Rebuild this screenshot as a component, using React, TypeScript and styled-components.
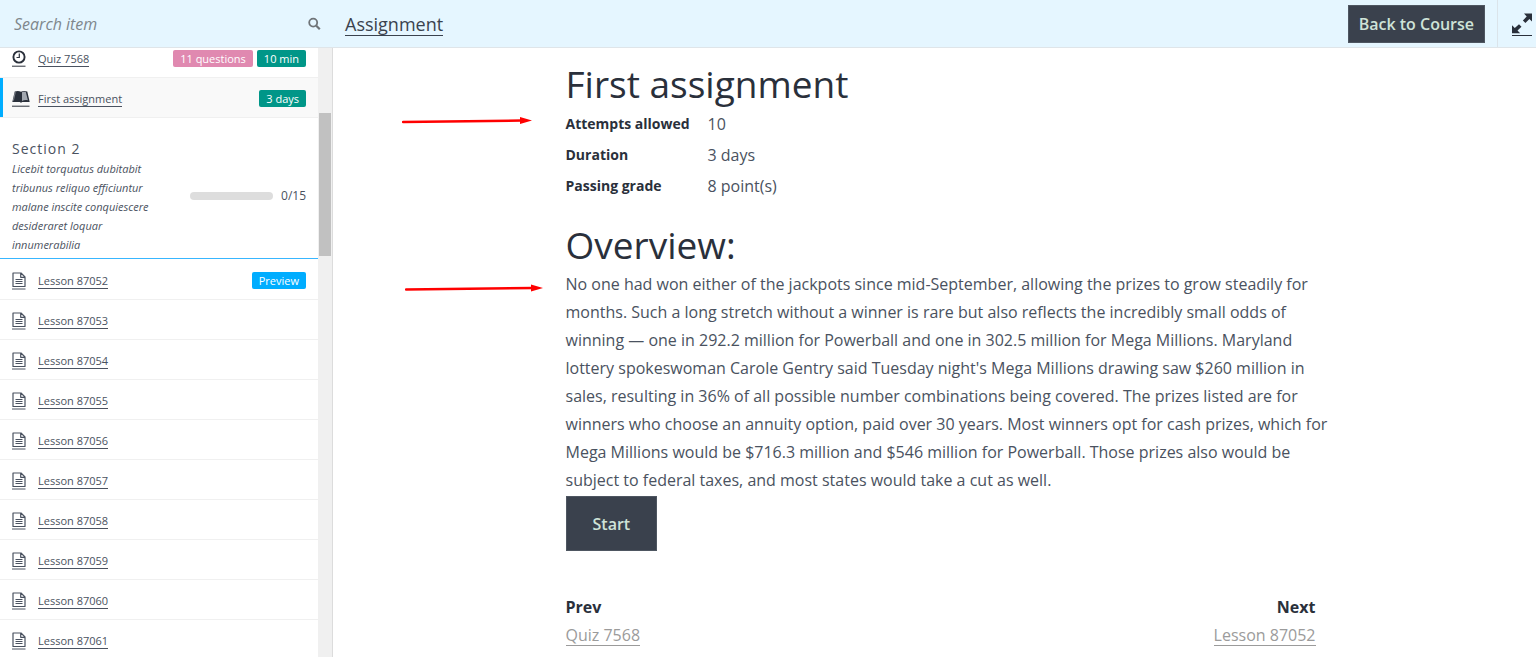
import React from "react";
import styled, { createGlobalStyle } from "styled-components";

const Global = createGlobalStyle`
  * { box-sizing: border-box; }
  html, body, #root { height: 100%; }
  body {
    margin: 0;
    overflow: hidden;
    background: #fff;
    color: #4a5260;
    font-family: "Open Sans", "Noto Sans", sans-serif;
    font-size: 16px;
    line-height: 28px;
  }
  a { color: inherit; text-decoration: none; }
  h1, h2, h3, p, ul, dl, dd { margin: 0; padding: 0; }
`;

const Page = styled.div`
  display: flex;
  flex-direction: column;
  height: 100vh;
`;

const TopBar = styled.header`
  display: flex;
  align-items: stretch;
  flex: none;
  height: 48px;
  background: #e5f6ff;
  border-bottom: 1px solid #dfe5e9;
`;

const SearchForm = styled.form`
  display: flex;
  align-items: center;
  flex: none;
  width: 333px;
  padding: 0 12px 0 14px;
`;

const SearchInput = styled.input`
  flex: 1;
  min-width: 0;
  padding: 0;
  border: 0;
  outline: 0;
  background: transparent;
  color: #4a5260;
  font: italic 16px/24px "Open Sans", "Noto Sans", sans-serif;
  &::placeholder { color: #7f878c; opacity: 1; }
`;

const IconButton = styled.button`
  display: flex;
  align-items: center;
  justify-content: center;
  padding: 0;
  border: 0;
  background: transparent;
  color: #6f7478;
`;

const TopTitle = styled.div`
  display: flex;
  flex: 1;
  align-items: center;
  padding: 2px 12px 0;
  font-size: 18px;
  line-height: 21px;
  color: #3a424e;
`;

const UnderLink = styled.a<{ $tone?: string }>`
  color: ${(p) => p.$tone ?? "inherit"};
  border-bottom: 1px solid currentColor;
`;

const BackButton = styled.button`
  align-self: center;
  height: 38px;
  padding: 0 10px;
  border: 1px solid #4e5661;
  background: #3a414d;
  color: #cfe3d8;
  font: 600 16px/24px "Open Sans", "Noto Sans", sans-serif;
`;

const Fullscreen = styled(IconButton)`
  width: 39px;
  margin-left: 12px;
  padding-left: 10px;
  border-left: 1px solid #dbe4ea;
  color: #2a303b;
`;

const Body = styled.div`
  display: flex;
  flex: 1;
  min-height: 0;
`;

const Sidebar = styled.aside`
  display: flex;
  flex: none;
  width: 333px;
  border-right: 1px solid #dcdcdc;
  overflow: hidden;
`;

const Curriculum = styled.div`
  flex: 1;
  min-width: 0;
  overflow: hidden;
`;

const ScrollTrack = styled.div`
  width: 14px;
  flex: none;
  padding: 65px 1px 0;
  background: #f0f0f0;
`;

const ScrollThumb = styled.div`
  height: 143px;
  background: #c1c1c1;
`;

const ItemList = styled.ul<{ $spaced?: boolean }>`
  list-style: none;
  padding-top: ${(p) => (p.$spaced ? 1 : 0)}px;
`;

const Item = styled.li<{ $current?: boolean; $cut?: boolean }>`
  display: flex;
  align-items: center;
  height: ${(p) => (p.$cut ? 30 : 40)}px;
  padding: ${(p) => (p.$cut ? "0 12px 8px" : "2px 12px 0")};
  border-bottom: 1px solid #f0f0f0;
  ${(p) => p.$current && "background: #f9f9f9; box-shadow: inset 3px 0 0 #00adff;"}
`;

const ItemIcon = styled.span`
  flex: none;
  display: flex;
  width: 26px;
  color: #2a303b;
  svg { display: block; }
`;

const ItemName = styled.span`
  flex: 1;
  font-size: 11px;
  line-height: 16px;
`;

const Tag = styled.span<{ $color: string }>`
  margin-left: 4px;
  padding: 0 7px;
  border-radius: 2px;
  background: ${(p) => p.$color};
  color: #fff;
  font-size: 11px;
  line-height: 17px;
`;

const SectionHead = styled.div`
  display: flex;
  align-items: center;
  justify-content: space-between;
  padding: 20px 12px 4px;
  border-bottom: 1px solid #38b6ff;
`;

const SectionText = styled.div`
  width: 160px;
`;

const SectionTitle = styled.h3`
  font-size: 14px;
  font-weight: 400;
  line-height: 21px;
  letter-spacing: 1px;
`;

const SectionDesc = styled.p`
  font-size: 11px;
  font-style: italic;
  line-height: 19px;
`;

const Progress = styled.div`
  display: flex;
  align-items: center;
  gap: 8px;
  font-size: 12px;
  line-height: 16px;
`;

const Bar = styled.div`
  width: 83px;
  height: 8px;
  border-radius: 4px;
  background: #ddd;
`;

const Main = styled.main`
  position: relative;
  flex: 1;
  min-width: 0;
  padding-left: 12px;
  overflow: hidden;
`;

const Content = styled.article`
  max-width: 750px;
  margin: 0 auto;
  padding-top: 12px;
`;

const Heading = styled.h1`
  font-size: 37px;
  font-weight: 400;
  line-height: 48px;
  color: #2a303b;
`;

const Facts = styled.dl`
  display: grid;
  grid-template-columns: 142px 1fr;
  grid-auto-rows: 31px;
  align-items: center;
  margin-bottom: 20px;
  dt { color: #2a303b; font-size: 14px; font-weight: 700; }
`;

const Overview = styled.p`
  margin: 0 -16px 2px 0;
  padding-top: 1px;
  font-size: 16px;
  line-height: 28px;
`;

const StartButton = styled.button`
  display: block;
  height: 55px;
  padding: 0 26px;
  border: 1px solid #4e5661;
  background: #3a414d;
  color: #cfe3d8;
  font: 600 16px/24px "Open Sans", "Noto Sans", sans-serif;
`;

const Pager = styled.nav`
  display: flex;
  justify-content: space-between;
  margin-top: 42px;
  line-height: 28px;
`;

const PagerSide = styled.div<{ $end?: boolean }>`
  display: flex;
  flex-direction: column;
  align-items: ${(p) => (p.$end ? "flex-end" : "flex-start")};
  strong { color: #2a303b; font-size: 16px; font-weight: 700; }
  a { line-height: 20px; margin-top: 4px; }
`;

const Pointer = styled.svg<{ $left: number; $top: number }>`
  position: absolute;
  left: ${(p) => p.$left}px;
  top: ${(p) => p.$top}px;
`;

const lessons = [87052, 87053, 87054, 87055, 87056, 87057, 87058, 87059, 87060, 87061];

const FileIcon = () => (
  <svg width="14" height="18" viewBox="0 0 14 18" fill="none" stroke="#4a5260">
    <path d="M1 1H9L13 5V14.500H1Z M8.700 1V5.300H13" strokeWidth="1.200" strokeLinejoin="round" />
    <path d="M3.500 7.500H10.500M3.500 9.500H10.500M3.500 11.500H10.500M0 17H13.500" />
  </svg>
);

const ClockIcon = () => (
  <svg width="14" height="17" viewBox="0 0 14 17" fill="none" stroke="currentColor">
    <circle cx="7" cy="7" r="5.600" strokeWidth="1.900" />
    <path d="M7.300 3.600V7.500H4.500" strokeWidth="1.200" />
    <path d="M0 16.200H13.500" />
  </svg>
);

const BookIcon = () => (
  <svg width="18" height="17" viewBox="0 0 18 17">
    <path d="M2.700 1.500C5 .7 7.300 .8 9 1.700C10.700 .8 13 .7 15.300 1.500L17.700 12H10.200C9.500 12.700 8.500 12.700 7.800 12H.3Z" fill="currentColor" />
    <path d="M3.300 2.200L1.400 10.600" stroke="#b8bcc2" strokeWidth=".6" />
    <path d="M10 2.300C11.500 1.700 12.800 1.700 13.800 2L15.900 10.300C14 9.800 11.700 10 10 10.900Z" fill="#a3a8b0" />
    <path d="M0 16.200H17.500" stroke="currentColor" />
  </svg>
);

const SearchIcon = () => (
  <svg width="13" height="13" viewBox="0 0 13 13" fill="none" stroke="currentColor">
    <circle cx="5.200" cy="5.600" r="4" strokeWidth="1.800" />
    <path d="M8.300 8.700L11.800 12.200" strokeWidth="2.200" />
  </svg>
);

const ExpandIcon = () => (
  <svg width="20" height="24" viewBox="0 0 20 24">
    <path d="M12 1.500H20V9.500L17.400 6.900L13.400 10.900L10.900 8.400L14.700 4.400ZM7 12.200L9.500 14.700L5.500 18.500L8.200 21.200H0V13.200L2.800 16Z" fill="currentColor" />
    <path d="M0 23.500H20" stroke="currentColor" />
  </svg>
);

export default function App() {
  return (
    <Page>
      <Global />
      <TopBar>
        <SearchForm>
          <SearchInput aria-label="Search item" placeholder="Search item" />
          <IconButton type="button" aria-label="Search"><SearchIcon /></IconButton>
        </SearchForm>
        <TopTitle><UnderLink href="#assignment">Assignment</UnderLink></TopTitle>
        <BackButton type="button">Back to Course</BackButton>
        <Fullscreen type="button" aria-label="Toggle full screen"><ExpandIcon /></Fullscreen>
      </TopBar>
      <Body>
        <Sidebar>
          <Curriculum>
            <ItemList>
              <Item $cut>
                <ItemIcon><ClockIcon /></ItemIcon>
                <ItemName><UnderLink href="#quiz">Quiz 7568</UnderLink></ItemName>
                <Tag $color="#e089b0">11 questions</Tag>
                <Tag $color="#009688">10 min</Tag>
              </Item>
              <Item $current>
                <ItemIcon><BookIcon /></ItemIcon>
                <ItemName><UnderLink href="#first">First assignment</UnderLink></ItemName>
                <Tag $color="#009688">3 days</Tag>
              </Item>
            </ItemList>
            <SectionHead>
              <SectionText>
                <SectionTitle>Section 2</SectionTitle>
                <SectionDesc>
                  Licebit torquatus dubitabit tribunus reliquo efficiuntur malane inscite conquiescere desideraret loquar innumerabilia
                </SectionDesc>
              </SectionText>
              <Progress><Bar /><span>0/15</span></Progress>
            </SectionHead>
            <ItemList $spaced>
              {lessons.map((n, i) => (
                <Item key={n}>
                  <ItemIcon><FileIcon /></ItemIcon>
                  <ItemName><UnderLink href={`#lesson-${n}`}>Lesson {n}</UnderLink></ItemName>
                  {i === 0 && <Tag $color="#00adff">Preview</Tag>}
                </Item>
              ))}
            </ItemList>
          </Curriculum>
          <ScrollTrack><ScrollThumb /></ScrollTrack>
        </Sidebar>
        <Main>
          <Content>
            <Heading>First assignment</Heading>
            <Facts>
              <dt>Attempts allowed</dt><dd>10</dd>
              <dt>Duration</dt><dd>3 days</dd>
              <dt>Passing grade</dt><dd>8 point(s)</dd>
            </Facts>
            <Heading as="h2">Overview:</Heading>
            <Overview>
              No one had won either of the jackpots since mid-September, allowing the prizes to grow steadily for months. Such a long stretch without a winner is rare but also reflects the incredibly small odds of winning — one in 292.2 million for Powerball and one in 302.5 million for Mega Millions. Maryland lottery spokeswoman Carole Gentry said Tuesday night's Mega Millions drawing saw $260 million in sales, resulting in 36% of all possible number combinations being covered. The prizes listed are for winners who choose an annuity option, paid over 30 years. Most winners opt for cash prizes, which for Mega Millions would be $716.3 million and $546 million for Powerball. Those prizes also would be subject to federal taxes, and most states would take a cut as well.
            </Overview>
            <StartButton type="button">Start</StartButton>
            <Pager>
              <PagerSide>
                <strong>Prev</strong>
                <UnderLink href="#quiz" $tone="#9b9b9b">Quiz 7568</UnderLink>
              </PagerSide>
              <PagerSide $end>
                <strong>Next</strong>
                <UnderLink href="#lesson-87052" $tone="#9b9b9b">Lesson 87052</UnderLink>
              </PagerSide>
            </Pager>
          </Content>
          <Pointer $left={69} $top={67} width="132" height="12" viewBox="0 0 132 12" aria-hidden="true">
            <path d="M1 7L120 5.500" stroke="#f00" strokeWidth="2.500" strokeLinecap="round" />
            <path d="M118 2L130 5.500L118 9Z" fill="#f00" />
          </Pointer>
          <Pointer $left={72} $top={234} width="140" height="12" viewBox="0 0 140 12" aria-hidden="true">
            <path d="M1 7.500L128 6" stroke="#f00" strokeWidth="2.500" strokeLinecap="round" />
            <path d="M126 2.500L138 6L126 9.500Z" fill="#f00" />
          </Pointer>
        </Main>
      </Body>
    </Page>
  );
}
